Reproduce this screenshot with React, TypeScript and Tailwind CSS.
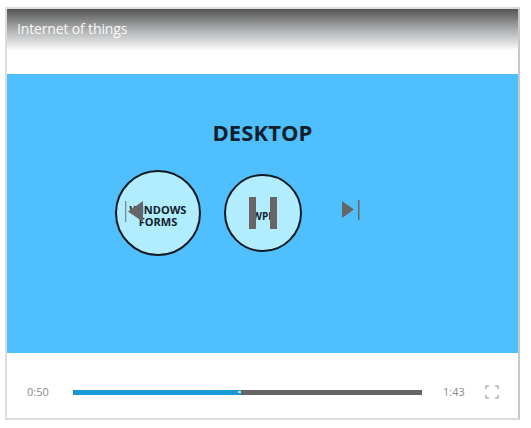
export default function App() {
  return (
    <div className="w-[531px] h-[428px] bg-white pt-[7px] pl-[5px] font-['Open_Sans',sans-serif]">
      <div className="relative w-[515px] h-[413px] border-2 border-[#dcdcdc] border-r-[#c8c8c8] flex flex-col bg-white">
        <div className="h-[65px] shrink-0 bg-white">
          <div className="h-[42px] bg-gradient-to-b from-[#555555] via-[#aeb0b2] to-white pl-[10px] pt-[9px] text-[14px] tracking-[-0.15px] leading-[22px] text-white/95">
            Internet of things
          </div>
        </div>
        <div className="h-[279px] shrink-0 bg-[#4fc0fd] flex flex-col items-center relative">
          <div className="mt-[43px] text-[22px] tracking-[0.1px] leading-[30px] font-bold text-[#0f1f2b]">DESKTOP</div>
          <div className="mt-[23px] self-start ml-[108px] flex items-center gap-[23px]">
            <div className="w-[86px] h-[86px] rounded-full bg-[#b1edff] border-[2.5px] border-[#111a20] flex items-center justify-center text-center text-[11px] leading-[12px] font-bold text-[#13202a] pt-[6px]">
              WINDOWS<br />FORMS
            </div>
            <div className="w-[78px] h-[78px] rounded-full bg-[#b1edff] border-[2.5px] border-[#111a20] flex items-center justify-center text-[10px] font-bold text-[#13202a] pt-[7px]">
              WPF
            </div>
          </div>
          {/* player controls overlaid on the slide */}
          <svg className="absolute left-[117px] top-[123px]" width="26" height="30" viewBox="0 0 26 30">
            <rect x="1" y="4" width="1.3" height="21" fill="#7a8b95" />
            <polygon points="4,14.5 19,4 19,25" fill="#666666" />
          </svg>
          <div className="absolute left-[242px] top-[123px] w-[28px] h-[32px] flex justify-between">
            <div className="w-[7px] h-full bg-[#666666]" />
            <div className="w-[7px] h-full bg-[#666666]" />
          </div>
          <svg className="absolute left-[335px] top-[125px]" width="20" height="22" viewBox="0 0 20 22">
            <polygon points="0,2 12,10.5 0,19" fill="#666666" />
            <rect x="16" y="1" width="1.5" height="20" fill="#666666" />
          </svg>
        </div>
        <div className="flex-1 flex items-center pt-[13px] pl-[20px] text-[11px] text-[#8a8a8a]">
          <span className="w-[24px] leading-[14px]">0:50</span>
          <div className="ml-[22px] w-[349px] h-[5px] bg-[#666666] flex">
            <div className="w-[168px] h-full bg-[#169ad8] rounded-l-full flex justify-end items-center">
              <div className="w-[3px] h-[2px] bg-[#b9dff2]" />
            </div>
          </div>
          <span className="ml-[21px] w-[24px] leading-[14px]">1:43</span>
          <svg className="ml-[18px]" width="14" height="14" viewBox="0 0 14 14" fill="none" stroke="#9a9a9a" strokeWidth="1.2">
            <path d="M1 4V1H4M10 1H13V4M13 10V13H10M4 13H1V10" />
          </svg>
        </div>
      </div>
    </div>
  );
}
